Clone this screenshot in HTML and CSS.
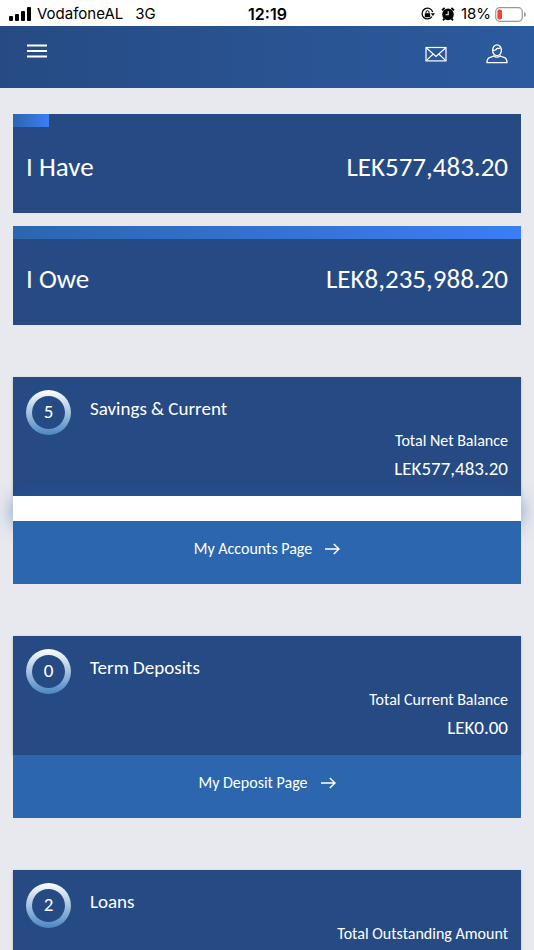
FILE: index.html
```html
<!DOCTYPE html>
<html lang="en">
<head>
  <meta charset="UTF-8">
  <meta name="viewport" content="width=device-width, initial-scale=1.0">
  <title>My Accounts</title>
  <link rel="stylesheet" href="styles.css">
</head>
<body>

<div class="status-bar">
  <div class="status-left">
    <svg class="signal" width="22" height="14" viewBox="0 0 22 14">
      <rect x="0" y="9" width="4" height="5" rx="1"/>
      <rect x="6" y="7" width="4" height="7" rx="1"/>
      <rect x="12" y="4" width="4" height="10" rx="1"/>
      <rect x="18" y="0" width="4" height="14" rx="1"/>
    </svg>
    <span>VodafoneAL</span>
    <span class="network">3G</span>
  </div>
  <div class="status-time">12:19</div>
  <div class="status-right">
    <svg width="14" height="14" viewBox="0 0 14 14">
      <path d="M11 9.600A5.400 5.400 0 1 1 11.700 5" fill="none" stroke="#000" stroke-width="1.2"/>
      <path d="M9.800 6.200H14l-2.100 2.800z"/>
      <rect x="3.800" y="6.200" width="5.400" height="4" rx="0.6"/>
      <path d="M5 6.400V5.200a1.500 1.500 0 0 1 3 0v1.200" fill="none" stroke="#000"/>
    </svg>
    <svg class="alarm" width="14" height="14" viewBox="0 0 14 14">
      <circle cx="7" cy="7.400" r="5.800"/>
      <path d="M1 3.400L3.600 1M13 3.400L10.400 1M3.400 11.600L2 13.400M10.600 11.600L12 13.400" stroke="#000" stroke-width="1.8"/>
      <path d="M7.200 4.200v3.600H4.600" fill="none" stroke="#fff" stroke-width="1.1"/>
    </svg>
    <span>18%</span>
    <svg class="battery" width="31" height="15" viewBox="0 0 31 15">
      <rect x="0.7" y="0.7" width="26.6" height="13.6" rx="4" fill="#fff" stroke="#999" stroke-width="1.2"/>
      <rect x="2.4" y="2.4" width="4.6" height="10.2" rx="1.8" fill="#f0443a"/>
      <path d="M29 5v5a2.600 2.600 0 0 0 0-5z" fill="#999"/>
    </svg>
  </div>
</div>

<header>
  <button class="icon-button" aria-label="Menu">
    <svg width="20" height="14" viewBox="0 0 20 14">
      <path d="M0 1.500h20M0 7h20M0 12.500h20" stroke="#fff" stroke-width="1.8"/>
    </svg>
  </button>
  <div class="header-actions">
    <button class="icon-button" aria-label="Messages">
      <svg width="22" height="20" viewBox="0 0 22 20" fill="none" stroke="#fff" stroke-width="1.2">
        <rect x="1" y="3.5" width="20" height="13.4"/>
        <path d="M1.200 3.800L11 12.400l9.800-8.600M1.200 16.600l6.800-6.400M20.800 16.600l-6.800-6.400"/>
      </svg>
    </button>
    <button class="icon-button" aria-label="Profile">
      <svg width="22" height="20" viewBox="0 0 22 20" fill="none" stroke="#fff" stroke-width="1.3">
        <ellipse cx="11" cy="6.3" rx="4.4" ry="5.4"/>
        <path d="M7 6.400c2.600 0 3.800-.6 4-2.400M11 4c1.200.8 2.400.6 3.600-.2"/>
        <path d="M8 11.800c-1 1-2.600 1.200-4 1.600-2.200.7-3 2-3 5.200h20c0-3.200-.8-4.500-3-5.200-1.400-.4-3-.6-4-1.600-1.400 1.800-4.600 1.800-6 0z"/>
      </svg>
    </button>
  </div>
</header>

<main>
  <section class="summary">
    <div class="summary-card">
      <div class="bar"><div class="bar-fill" style="width: 7%"></div></div>
      <div class="summary-row"><span>I Have</span><span>LEK577,483.20</span></div>
    </div>
    <div class="summary-card">
      <div class="bar"><div class="bar-fill" style="width: 100%"></div></div>
      <div class="summary-row"><span>I Owe</span><span>LEK8,235,988.20</span></div>
    </div>
  </section>

  <section class="account">
    <div class="account-info">
      <div class="account-head">
        <span class="count">5</span>
        <h2>Savings &amp; Current</h2>
      </div>
      <p class="label">Total Net Balance</p>
      <p class="amount">LEK577,483.20</p>
    </div>
    <div class="account-gap"></div>
    <a class="account-link" href="#">My Accounts Page
      <svg class="arrow" width="15" height="12" viewBox="0 0 15 12"><path d="M0 6h14M8.800 1L14 6l-5.200 5"/></svg>
    </a>
  </section>

  <section class="account">
    <div class="account-info">
      <div class="account-head">
        <span class="count">0</span>
        <h2>Term Deposits</h2>
      </div>
      <p class="label">Total Current Balance</p>
      <p class="amount">LEK0.00</p>
    </div>
    <a class="account-link" href="#">My Deposit Page
      <svg class="arrow" width="15" height="12" viewBox="0 0 15 12"><path d="M0 6h14M8.800 1L14 6l-5.200 5"/></svg>
    </a>
  </section>

  <section class="account">
    <div class="account-info">
      <div class="account-head">
        <span class="count">2</span>
        <h2>Loans</h2>
      </div>
      <p class="label">Total Outstanding Amount</p>
    </div>
  </section>
</main>

</body>
</html>
```
FILE: styles.css
```css
* {
  box-sizing: border-box;
}

body {
  margin: 0;
  height: 100vh;
  display: flex;
  flex-direction: column;
  overflow: hidden;
  background-color: #e8e9ee;
  color: #fff;
  font-family: Calibri, Carlito, Lato, sans-serif;
}

/* Phone status bar */
.status-bar {
  display: grid;
  grid-template-columns: 1fr auto 1fr;
  align-items: center;
  flex: none;
  height: 26px;
  padding: 2px 8px 0 9px;
  background-color: #fff;
  color: #000;
  font-family: Inter, sans-serif;
  font-size: 15px;
  line-height: 24px;
}

.status-left,
.status-right {
  display: flex;
  align-items: center;
}

.status-right {
  justify-content: flex-end;
}

.signal {
  margin-right: 6px;
}

.network {
  margin-left: 12px;
}

.status-time {
  font-size: 16px;
  font-weight: 600;
}

.alarm {
  margin: 0 6px;
}

.battery {
  margin-left: 4px;
}

/* Header */
header {
  display: flex;
  justify-content: space-between;
  align-items: flex-start;
  flex: none;
  height: 62px;
  padding: 18px 26px 18px 27px;
  background: linear-gradient(to right, #264b84, #2c5a9e);
}

.header-actions {
  display: flex;
  gap: 39px;
}

.icon-button {
  padding: 0;
  border: none;
  background: none;
  cursor: pointer;
}

.icon-button svg {
  display: block;
}

main {
  flex: 1;
  min-height: 0;
  padding: 26px 13px 0;
  overflow-y: auto;
  scrollbar-width: none;
}

/* Totals */
.summary {
  display: flex;
  flex-direction: column;
  gap: 13px;
}

.summary-card {
  height: 99px;
  background-color: #264b84;
}

.bar {
  height: 13px;
}

.bar-fill {
  height: 100%;
  background: linear-gradient(to right, #2b66ae, #3b7ef5);
}

.summary-row {
  display: flex;
  justify-content: space-between;
  padding: 24px 13px;
  font-size: 27px;
  line-height: 32px;
}

/* Account cards */
.account {
  margin-top: 52px;
}

.account-info {
  padding: 13px 13px 10px;
  background-color: #264b84;
  box-shadow: 0 1px 3px rgba(0, 0, 0, 0.2);
}

.account-head {
  display: flex;
  gap: 19px;
  height: 40px;
}

.count {
  display: flex;
  justify-content: center;
  flex: none;
  width: 45px;
  height: 45px;
  border: 6px solid transparent;
  border-radius: 50%;
  background: linear-gradient(#264b84, #264b84) padding-box,
    linear-gradient(#fff, #4b86c2) border-box;
  font-size: 19px;
  line-height: 31px;
}

h2 {
  margin: 0;
  font-size: 19px;
  font-weight: 400;
  line-height: 38px;
}

.label,
.amount {
  margin: 0;
  text-align: right;
}

.label {
  font-size: 16px;
  line-height: 22px;
}

.amount {
  font-size: 19px;
  line-height: 34px;
}

.account-gap {
  height: 25px;
  background-color: #fff;
  box-shadow: 0 3px 18px rgba(43, 102, 174, 0.6);
}

.account-link {
  display: flex;
  position: relative;
  justify-content: center;
  align-items: center;
  gap: 13px;
  height: 63px;
  padding-bottom: 8px;
  background-color: #2b66ae;
  color: #fff;
  font-size: 16px;
  text-decoration: none;
}

.arrow {
  fill: none;
  stroke: #fff;
  stroke-width: 1.4;
}
```
